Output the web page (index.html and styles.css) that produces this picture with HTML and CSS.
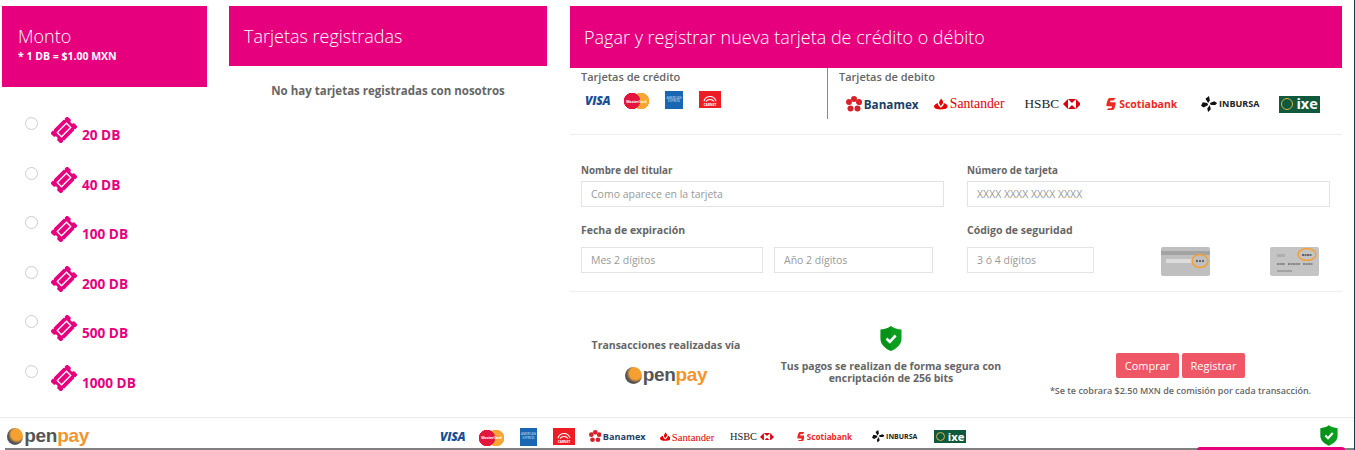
FILE: index.html
```html
<!DOCTYPE html>
<html lang="es">
<head>
<meta charset="utf-8">
<title>Recargar DB</title>
<link rel="stylesheet" href="styles.css">
</head>
<body>
<svg class="defs" width="0" height="0">
	<symbol id="ticket" viewBox="0 0 26 26">
		<g transform="rotate(-45 13 13)">
			<path fill="#e6007e" d="M1 5.500h3.500l.8 1 .8-1H20l.8 1 .8-1H25v5.500a2 2 0 0 0 0 4v5.500h-3.400l-.8-1-.8 1H6.100l-.8-1-.8 1H1V15a2 2 0 0 0 0-4z"/>
			<rect x="6.500" y="10" width="13" height="6" fill="none" stroke="#fff" stroke-width="1.300"/>
		</g>
	</symbol>
	<symbol id="shield" viewBox="0 0 22 25">
		<path fill="#0a9f1e" d="M11 0c3 2.200 6.500 3.300 10.500 3.500v9c0 5.500-4 9.800-10.500 12.500C4.500 22.300.5 18 .5 12.500v-9C4.500 3.300 8 2.200 11 0z"/>
		<path fill="#067a14" d="M11 0c-3 2.200-6.500 3.300-10.500 3.500v9C.5 18 4.500 22.300 11 25z" opacity=".35"/>
		<path fill="none" stroke="#fff" stroke-width="2.600" d="M6.500 12.500l3.300 3.300 5.800-6.300"/>
	</symbol>
	<symbol id="carnet-arc" viewBox="0 0 16 8">
		<path fill="none" stroke="#fff" stroke-width="1.200" d="M2 7c1-3 3-4.500 6-4.500S13 4 14 7M4 7.500c1-1.500 2.500-2 4-2s3 .5 4 2"/>
	</symbol>
	<symbol id="banamex-mark" viewBox="0 0 16 16">
		<g fill="#d8222a">
			<circle cx="8" cy="3" r="3"/><circle cx="13" cy="6" r="3"/><circle cx="11.500" cy="12.500" r="3"/><circle cx="4.500" cy="12.500" r="3"/><circle cx="3" cy="6" r="3"/>
		</g>
		<circle cx="8" cy="8" r="2" fill="#fff"/>
	</symbol>
	<symbol id="flame" viewBox="0 0 16 13">
		<path fill="#e60000" d="M8 0c1.500 2 3 3 2.500 5.500C10 7 9 7.500 8 9 7 7.500 5.600 6.500 6 4.500 6.300 3 8 2 8 0zM4.500 5.500C2 6.500 0 7.800 0 9.500 0 11.800 3.500 13 8 13s8-1.200 8-3.500c0-1.700-2-3-4.500-4 .5 2-1.500 4-3.500 5.500-2-1.500-4-3.500-3.500-5.500z"/>
	</symbol>
	<symbol id="hexagon" viewBox="0 0 18 10">
		<path fill="#db0011" d="M0 5l5-5v10zM18 5l-5-5v10zM5 0h8L9 4zM5 10h8L9 6z"/>
	</symbol>
	<symbol id="scotia-mark" viewBox="0 0 10 13">
		<path fill="#ec2a23" d="M3 0h7L7.500 2.500H4.500L4 4.500h4.500c1.200 0 1.500 1 1.200 2L8.500 11 6.500 13H0l2.500-2.500h3L6 8.500H1.500C.3 8.500 0 7.500.3 6.500L1.500 2z"/>
	</symbol>
	<symbol id="pinwheel" viewBox="0 0 18 18">
		<path fill="#111" d="M8 8L5 3l4-3 1 5zM10 8l5-2 3 2-2 2-5 0zM10 10l1 5-3 3-1-4zM8 10l-5 3-3-2 2-4 5 1z"/>
	</symbol>
	<symbol id="card-back" viewBox="0 0 49 29">
		<rect width="49" height="29" rx="2" fill="#bfbfbf"/>
		<rect y="4" width="49" height="4" fill="#a3a3a3"/>
		<rect x="5" y="12" width="26" height="4" fill="#dcdcdc"/>
		<path stroke="#666" stroke-width="2" stroke-dasharray="2 1" d="M35 14h8"/>
		<ellipse cx="39" cy="14" rx="8" ry="6.500" fill="none" stroke="#f6a032" stroke-width="1.500"/>
	</symbol>
	<symbol id="card-front" viewBox="0 0 49 29">
		<rect width="49" height="29" rx="2" fill="#c4c4c4"/>
		<rect x="7" y="7" width="8" height="3" fill="#adadad"/>
		<path stroke="#666" stroke-width="2" stroke-dasharray="2 .5" d="M32 8h10"/>
		<ellipse cx="37" cy="7.500" rx="9" ry="6" fill="none" stroke="#f6a032" stroke-width="1.500"/>
		<path stroke="#858585" stroke-width="2" stroke-dasharray="2 .5" d="M7 17h8M18 17h12M33 17h10"/>
		<rect x="7" y="23" width="15" height="2" fill="#a3a3a3"/>
	</symbol>
</svg>

<div class="page">
	<main class="columns">
		<section class="col-amount">
			<header class="panel-head amount-head">
				<h2>Monto</h2>
				<p>* 1 DB = $1.00 MXN</p>
			</header>
			<form class="amounts">
				<label class="amount"><input type="radio" name="monto"><svg class="ticket"><use href="#ticket"/></svg><span>20 DB</span></label>
				<label class="amount"><input type="radio" name="monto"><svg class="ticket"><use href="#ticket"/></svg><span>40 DB</span></label>
				<label class="amount"><input type="radio" name="monto"><svg class="ticket"><use href="#ticket"/></svg><span>100 DB</span></label>
				<label class="amount"><input type="radio" name="monto"><svg class="ticket"><use href="#ticket"/></svg><span>200 DB</span></label>
				<label class="amount"><input type="radio" name="monto"><svg class="ticket"><use href="#ticket"/></svg><span>500 DB</span></label>
				<label class="amount"><input type="radio" name="monto"><svg class="ticket"><use href="#ticket"/></svg><span>1000 DB</span></label>
			</form>
		</section>

		<section class="col-saved">
			<header class="panel-head saved-head"><h2>Tarjetas registradas</h2></header>
			<p class="empty">No hay tarjetas registradas con nosotros</p>
		</section>

		<section class="col-new">
			<header class="panel-head new-head"><h2>Pagar y registrar nueva tarjeta de crédito o débito</h2></header>

			<div class="card-types">
				<div class="credit">
					<h3>Tarjetas de crédito</h3>
					<div class="logos credit-logos">
						<span class="logo visa">VISA</span>
						<span class="logo mc"><span>MasterCard</span></span>
						<span class="logo amex">AMERICAN EXPRESS</span>
						<span class="logo carnet"><svg><use href="#carnet-arc"/></svg>CARNET</span>
					</div>
				</div>
				<div class="debit">
					<h3>Tarjetas de debito</h3>
					<div class="logos banks">
						<span class="logo banamex"><svg><use href="#banamex-mark"/></svg>Banamex</span>
						<span class="logo santander"><svg><use href="#flame"/></svg>Santander</span>
						<span class="logo hsbc">HSBC<svg><use href="#hexagon"/></svg></span>
						<span class="logo scotia"><svg><use href="#scotia-mark"/></svg>Scotiabank</span>
						<span class="logo inbursa"><svg><use href="#pinwheel"/></svg>INBURSA</span>
						<span class="logo ixe"><i></i><span>ixe</span></span>
					</div>
				</div>
			</div>

			<form class="card-form">
				<div class="form-row">
					<div class="field wide">
						<label>Nombre del titular</label>
						<input type="text" placeholder="Como aparece en la tarjeta">
					</div>
					<div class="field wide">
						<label>Número de tarjeta</label>
						<input type="text" placeholder="XXXX XXXX XXXX XXXX">
					</div>
				</div>
				<div class="form-row second">
					<div class="field wide">
						<label>Fecha de expiración</label>
						<div class="inputs">
							<input class="month" type="text" placeholder="Mes 2 dígitos">
							<input class="year" type="text" placeholder="Año 2 dígitos">
						</div>
					</div>
					<div class="field wide">
						<label>Código de seguridad</label>
						<div class="inputs">
							<input class="cvv" type="text" placeholder="3 ó 4 dígitos">
							<svg class="card-pic back"><use href="#card-back"/></svg>
							<svg class="card-pic front"><use href="#card-front"/></svg>
						</div>
					</div>
				</div>
			</form>

			<div class="checkout">
				<div class="via">
					<h4>Transacciones realizadas vía</h4>
					<div class="openpay"><i></i><span>pen</span><b>pay</b></div>
				</div>
				<div class="secure">
					<svg class="shield"><use href="#shield"/></svg>
					<h4>Tus pagos se realizan de forma segura con encriptación de 256 bits</h4>
				</div>
				<div class="actions">
					<div class="buttons">
						<button type="button">Comprar</button>
						<button type="button">Registrar</button>
					</div>
					<p>*Se te cobrara $2.50 MXN de comisión por cada transacción.</p>
				</div>
			</div>
		</section>
	</main>

	<footer class="foot">
		<div class="foot-inner">
			<div class="openpay small"><i></i><span>pen</span><b>pay</b></div>
			<div class="logos foot-logos">
				<span class="logo visa">VISA</span>
				<span class="logo mc"><span>MasterCard</span></span>
				<span class="logo amex">AMERICAN EXPRESS</span>
				<span class="logo carnet"><svg><use href="#carnet-arc"/></svg>CARNET</span>
				<span class="logo banamex"><svg><use href="#banamex-mark"/></svg>Banamex</span>
				<span class="logo santander"><svg><use href="#flame"/></svg>Santander</span>
				<span class="logo hsbc">HSBC<svg><use href="#hexagon"/></svg></span>
				<span class="logo scotia"><svg><use href="#scotia-mark"/></svg>Scotiabank</span>
				<span class="logo inbursa"><svg><use href="#pinwheel"/></svg>INBURSA</span>
				<span class="logo ixe"><i></i><span>ixe</span></span>
			</div>
			<svg class="shield small"><use href="#shield"/></svg>
		</div>
		<div class="chat-tab"></div>
	</footer>
</div>
</body>
</html>
```

FILE: styles.css
```css
* { box-sizing : border-box ; }
html, body {
	margin : 0 ;
	height : 450px ;
	overflow : hidden ;
	background : #fff ;
	font-family : "Open Sans", "Liberation Sans", sans-serif ;
	color : #666 ;
}
h2, h3, h4, p { margin : 0 ; }
.defs { position : absolute ; }

.page {
	height : 450px ;
	border-right : 1px solid #1d3a4f ;
	display : flex ;
	flex-direction : column ;
}
.columns {
	height : 417px ;
	padding : 6px 0 0 2px ;
	display : flex ;
}

/* pink headers */
.panel-head { background : #e6007e ; color : #fff ; }
.panel-head h2 { font-size : 18px ; font-weight : 300 ; line-height : 24px ; }
.amount-head { height : 81px ; padding : 18px 16px 0 ; }
.amount-head p { font-size : 10.500px ; font-weight : 700 ; line-height : 14px ; margin-top : 1px ; }
.saved-head { height : 60px ; padding : 18px 15px 0 ; }
.new-head { height : 62px ; padding : 19px 14px 0 ; }

/* columns */
.col-amount { width : 205px ; }
.col-saved { width : 318px ; margin-left : 22px ; }
.col-new { width : 772px ; margin-left : 23px ; }

/* amount list */
.amounts { padding : 28px 0 0 23px ; }
.amount {
	height : 49.600px ;
	display : flex ;
	align-items : flex-start ;
	color : #e6007e ;
	font-size : 13.600px ;
	font-weight : 700 ;
}
.amount input {
	appearance : none ;
	width : 13px ;
	height : 13px ;
	margin : 2px 13px 0 0 ;
	border : 1px solid #ccc ;
	border-radius : 50% ;
	background : #fff ;
}
.ticket { width : 26px ; height : 26px ; margin-top : 2px ; }
.amount span { margin : 10px 0 0 5px ; line-height : 20px ; }

.empty { text-align : center ; font-size : 11.500px ; font-weight : 700 ; line-height : 18px ; margin-top : 16px ; }

/* card types */
.card-types {
	height : 67px ;
	display : flex ;
	border-bottom : 1px solid #eee ;
}
.credit { width : 258px ; height : 51px ; padding-left : 11px ; border-right : 1px solid #888 ; }
.debit { padding-left : 11px ; }
.card-types h3 { font-size : 11px ; font-weight : 600 ; line-height : 18px ; }

/* logos */
.logos { display : flex ; align-items : center ; }
.credit-logos { margin : 5px 0 0 4px ; height : 20px ; align-items : flex-start ; }
.banks { margin : 9px 0 0 7px ; font-size : 10px ; height : 18px ; }
.foot-logos { font-size : 7.800px ; }

.logo { display : flex ; align-items : center ; flex : none ; white-space : nowrap ; }
.logo svg { flex : none ; }
.visa { width : 26px ; height : 18px ; font-size : 12px ; font-weight : 800 ; font-style : italic ; color : #1a4f95 ; letter-spacing : -.2px ; }
.mc {
	width : 25px ;
	height : 16px ;
	margin : 2px 0 0 13px ;
	justify-content : center ;
	background : radial-gradient(circle at 8px 8px, #e3173e 8px, transparent 8.500px), radial-gradient(circle at 17px 8px, #f9a533 8px, transparent 8.500px) ;
	color : #fff ;
	font-size : 3.500px ;
	font-weight : 700 ;
}
.amex {
	width : 18px ;
	height : 18px ;
	margin-left : 16px ;
	background : #1b66b3 ;
	color : #cfe1f3 ;
	font-size : 3px ;
	line-height : 3.500px ;
	white-space : normal ;
	text-align : center ;
}
.carnet {
	width : 22px ;
	height : 17px ;
	margin-left : 16px ;
	flex-direction : column ;
	justify-content : flex-end ;
	padding-bottom : 1px ;
	background : #ee1c25 ;
	color : #fff ;
	font-size : 3.200px ;
	font-weight : 700 ;
}
.carnet svg { width : 16px ; height : 8px ; margin-bottom : 1px ; }
.banamex { font-size : 1.170em ; font-weight : 700 ; color : #1c3f66 ; }
.banamex svg { width : 1.370em ; height : 1.370em ; margin-right : .15em ; }
.santander { font-family : "Liberation Serif", serif ; font-size : 1.370em ; color : #e60000 ; margin-left : 1.140em ; }
.santander svg { width : 1em ; height : .850em ; margin-right : .14em ; }
.hsbc { font-family : "Liberation Serif", serif ; font-size : 1.330em ; color : #222 ; margin-left : 1.500em ; }
.hsbc svg { width : 1.350em ; height : .750em ; margin-left : .25em ; }
.scotia { font-size : 1.050em ; font-weight : 700 ; color : #ec2a23 ; margin-left : 2.440em ; }
.scotia svg { width : .950em ; height : 1.200em ; margin-right : .3em ; }
.inbursa { font-size : .900em ; font-weight : 700 ; color : #222 ; margin-left : 2.660em ; }
.inbursa svg { width : 1.780em ; height : 1.780em ; margin-right : .2em ; }
.ixe {
	width : 4.100em ;
	height : 1.700em ;
	margin-left : 2em ;
	padding-left : .2em ;
	background : #0f5a3c ;
	color : #fff ;
	font-weight : 700 ;
}
.ixe i {
	width : 1.200em ;
	height : 1.200em ;
	margin-right : .3em ;
	border-radius : 50% ;
	border : .15em solid #d9b23c ;
}
.ixe span { font-size : 1.450em ; line-height : 1 ; }

/* form */
.card-form { padding : 28px 12px 15px 11px ; border-bottom : 1px solid #eee ; }
.form-row { display : flex ; gap : 23px ; }
.form-row.second { margin-top : 15px ; }
.field.wide { width : 363px ; }
.field label { display : block ; height : 15px ; margin-bottom : 3px ; font-size : 9.800px ; font-weight : 700 ; line-height : 15px ; }
.second .field label { height : 16px ; margin-bottom : 9px ; font-size : 10.500px ; line-height : 16px ; }
.field input {
	display : block ;
	width : 100% ;
	height : 26px ;
	padding : 0 9px ;
	border : 1px solid #e3e3e3 ;
	outline : none ;
	font : 10.500px "Open Sans", sans-serif ;
	color : #666 ;
}
.field input::placeholder { color : #999 ; opacity : 1 ; }
.inputs { display : flex ; align-items : flex-start ; height : 29px ; }
.inputs input.month { width : 182px ; }
.inputs input.year { width : 159px ; margin-left : 11px ; }
.inputs input.cvv { width : 127px ; }
.card-pic { width : 49px ; height : 29px ; flex : none ; }
.card-pic.back { margin-left : 67px ; }
.card-pic.front { margin-left : 60px ; }

/* bottom block */
.checkout { display : flex ; text-align : center ; }
.checkout h4 { font-size : 10.500px ; font-weight : 700 ; }
.via { width : 192px ; padding-top : 45px ; }
.via h4 { line-height : 16px ; }
.secure { width : 258px ; padding-top : 34px ; }
.secure h4 { line-height : 12px ; margin : 9px 14px 0 ; }
.shield { display : block ; width : 22px ; height : 25px ; margin : 0 auto ; }
.actions { width : 322px ; padding : 61px 1px 0 0 ; }
.buttons { display : flex ; justify-content : center ; gap : 3px ; }
.buttons button {
	width : 63px ;
	height : 25px ;
	padding : 0 ;
	border : 0 ;
	border-radius : 2px ;
	background : #ef5666 ;
	color : #fff ;
	font : 11px "Open Sans", sans-serif ;
}
.actions p { margin-top : 6px ; font-size : 9px ; font-weight : 600 ; line-height : 14px ; white-space : nowrap ; }

/* openpay wordmark */
.openpay {
	display : flex ;
	align-items : center ;
	justify-content : center ;
	margin-top : 11px ;
	height : 22px ;
	font-family : "Liberation Sans", sans-serif ;
	font-size : 19px ;
	font-weight : 700 ;
	color : #555 ;
}
.openpay i {
	width : 17px ;
	height : 17px ;
	margin-right : 1px ;
	border-radius : 50% ;
	background : radial-gradient(circle at 62% 38%, #f6a032 40%, #555 60%) ;
}
.openpay span, .openpay b { font-weight : 700 ; letter-spacing : -.3px ; }
.openpay b { color : #f6932c ; }

/* footer */
.foot { position : relative ; height : 33px ; border-top : 1px solid #e8e8e8 ; }
.foot-inner {
	height : 32px ;
	margin-left : 5px ;
	padding-left : 2px ;
	border-bottom : 2px solid #808080 ;
	display : flex ;
	align-items : center ;
}
.openpay.small { margin : 6px 0 0 ; width : 82px ; justify-content : flex-start ; }
.foot-logos { margin : 7px 0 0 351px ; height : 18px ; }
.foot-logos .visa { height : 17px ; }
.foot-logos .amex { width : 17px ; }
.foot-logos .banamex { margin-left : 14px ; }
.foot-logos .santander { margin-left : 14px ; }
.foot-logos .scotia { margin-left : 23px ; }
.foot-logos .inbursa { margin-left : 20px ; }
.foot-logos .ixe { margin-left : 17px ; }
.shield.small { width : 18px ; height : 21px ; margin : 5px 0 0 354px ; }
.chat-tab {
	position : absolute ;
	left : 1197px ;
	bottom : 0 ;
	width : 148px ;
	height : 3px ;
	border-radius : 4px 4px 0 0 ;
	background : #e6007e ;
}
```
